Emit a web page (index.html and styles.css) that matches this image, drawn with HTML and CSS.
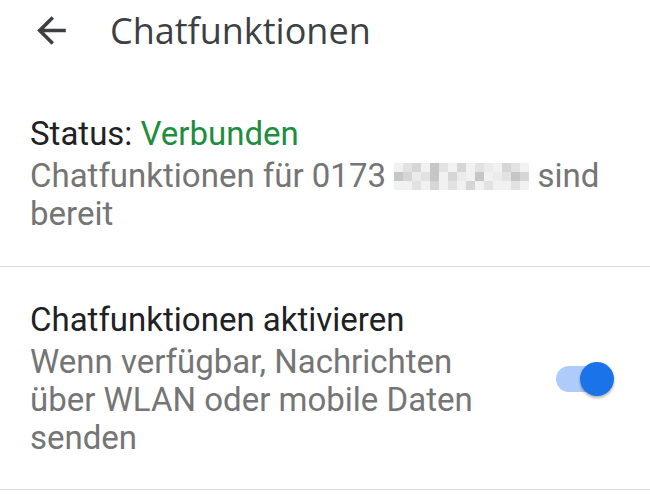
FILE: index.html
```html
<!DOCTYPE html>
<html lang="de">
<head>
    <meta charset="UTF-8">
    <meta name="viewport" content="width=device-width, initial-scale=1.0">
    <title>Chatfunktionen</title>
    <link rel="stylesheet" href="styles.css">
</head>
<body>
    <div class="toolbar">
        <svg class="back" viewBox="0 0 24 24" width="43" height="43">
            <path d="M20 11H7.83l5.59-5.59L12 4l-8 8 8 8 1.41-1.41L7.83 13H20v-2z" fill="#3c4043"/>
        </svg>
        <h1>Chatfunktionen</h1>
    </div>

    <div class="pref status">
        <div class="pref-text">
            <div class="pref-title">Status: <span class="ok">Verbunden</span></div>
            <div class="pref-summary">Chatfunktionen für 0173 <span class="blur"><i class="c1"></i><i class="c2"></i><i class="c3"></i><i class="c1"></i><i class="c4"></i><i class="c2"></i><i class="c1"></i><i class="c3"></i><i class="c1"></i><i class="c2"></i><i class="c5"></i><i class="c1"></i><i class="c3"></i><i class="c2"></i><i class="c1"></i><i class="c4"></i><i class="c3"></i><i class="c5"></i><i class="c2"></i><i class="c4"></i><i class="c1"></i><i class="c3"></i><i class="c5"></i><i class="c1"></i><i class="c4"></i><i class="c1"></i><i class="c5"></i><i class="c2"></i><i class="c4"></i><i class="c3"></i><i class="c1"></i><i class="c1"></i><i class="c2"></i><i class="c1"></i><i class="c3"></i><i class="c1"></i><i class="c2"></i><i class="c1"></i><i class="c3"></i><i class="c1"></i><i class="c2"></i><i class="c1"></i><i class="c1"></i><i class="c2"></i><i class="c1"></i></span> sind bereit</div>
        </div>
    </div>

    <div class="pref">
        <div class="pref-text">
            <div class="pref-title">Chatfunktionen aktivieren</div>
            <div class="pref-summary">Wenn verfügbar, Nachrichten über WLAN oder mobile Daten senden</div>
        </div>
        <div class="switch">
            <div class="track"></div>
            <div class="thumb"></div>
        </div>
    </div>
</body>
</html>
```

FILE: styles.css
```css
body {
    margin: 0;
    background: #fff;
    font-family: 'Roboto', sans-serif;
    overflow: hidden;
}

.toolbar {
    display: flex;
    align-items: center;
    height: 60px;
    padding-left: 30px;
}

.toolbar .back {
    flex: none;
}

.toolbar h1 {
    margin: 0 0 0 37px;
    font-family: 'Open Sans', sans-serif;
    font-weight: 400;
    font-size: 36px;
    color: #3c4043;
}

.pref {
    display: flex;
    align-items: center;
    border-bottom: 1.5px solid #dcdcdc;
    padding: 33px 30px 32px 30px;
}

.pref.status {
    padding-top: 54px;
    padding-bottom: 33px;
}

.pref-text {
    flex: 1;
    max-width: 460px;
}

.status .pref-text {
    max-width: 580px;
}

.pref-title {
    font-size: 33px;
    line-height: 39px;
    color: #202124;
}

.ok {
    color: #1e8e3e;
}

.pref-summary {
    margin-top: 4px;
    font-size: 33px;
    line-height: 38px;
    color: #757575;
}

/* pixelated phone number */
.blur {
    display: inline-grid;
    grid-template-columns: repeat(15, 9px);
    grid-auto-rows: 9px;
    vertical-align: top;
    margin-top: 6px;
}

.blur i { display: block; }
.blur .c1 { background: #f1f1f1; }
.blur .c2 { background: #e2e2e2; }
.blur .c3 { background: #d6d6d6; }
.blur .c4 { background: #c6c6c6; }
.blur .c5 { background: #ebebeb; }

.switch {
    position: relative;
    width: 60px;
    height: 36px;
    margin-left: auto;
    margin-right: 6px;
}

.track {
    position: absolute;
    left: 2px;
    top: 5px;
    width: 50px;
    height: 26px;
    border-radius: 13px;
    background: #aecbfa;
}

.thumb {
    position: absolute;
    right: 0;
    top: 1px;
    width: 34px;
    height: 34px;
    border-radius: 50%;
    background: #1a73e8;
    box-shadow: 0 2px 3px rgba(0, 0, 0, 0.3);
}
```
